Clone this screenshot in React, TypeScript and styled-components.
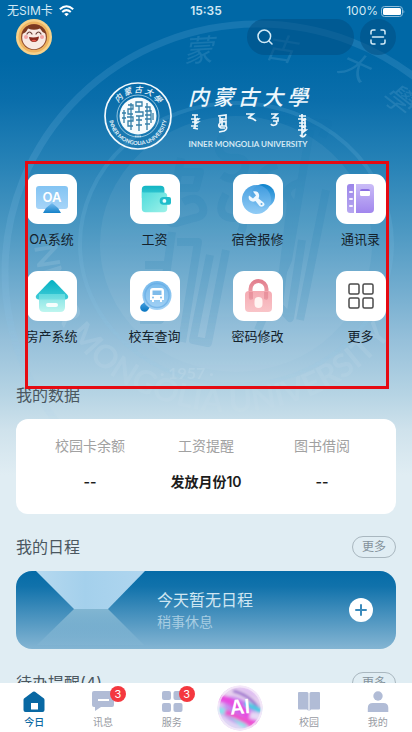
import React from 'react';
import styled, { createGlobalStyle, css } from 'styled-components';

const GlobalStyle = createGlobalStyle`
  *, *::before, *::after { box-sizing: border-box; }
  html, body { margin: 0; padding: 0; }
  body, button, input {
    font-family: Inter, 'Noto Sans CJK SC', sans-serif;
  }
  button { border: 0; padding: 0; background: none; cursor: pointer; color: inherit; }
  svg { display: block; }
  h1, h2, p, dl, dt, dd { margin: 0; font-weight: 400; }
`;

const Page = styled.div`
  position: relative;
  display: flex;
  flex-direction: column;
  height: 100vh;
  overflow: hidden;
  background: #e0edf3 linear-gradient(
    #0068a6 0, #0068a6 60px, #0a6eab 100px, #2581b6 160px, #4c98c2 230px,
    #73adcf 290px, #96c0da 340px, #b6d4e4 395px, #cfe2ec 430px, #e0edf3 475px
  ) no-repeat;
`;

const Watermark = styled.svg`
  position: absolute;
  top: 0;
  left: 50%;
  transform: translateX(-50%);
  pointer-events: none;
`;

const Content = styled.main`
  position: relative;
  flex: 1;
  min-height: 0;
  overflow: hidden;
`;

const StatusBar = styled.div`
  display: grid;
  grid-template-columns: 1fr auto 1fr;
  align-items: center;
  padding: 3px 7px 0;
  line-height: 16px;
  font-size: 12px;
  color: #d3e8f4;
`;

const StatusGroup = styled.div<{ $end?: boolean }>`
  display: flex;
  align-items: center;
  gap: ${(p) => (p.$end ? 3 : 6)}px;
  justify-content: ${(p) => (p.$end ? 'flex-end' : 'flex-start')};
`;

const Clock = styled.span`
  font-size: 12px;
  font-weight: 600;
`;

const Header = styled.header`
  display: flex;
  align-items: center;
  gap: 6px;
  padding: 0 16px;
`;

const Avatar = styled.button`
  margin-right: auto;
  width: 36px;
  height: 36px;
  border-radius: 50%;
`;

const SearchBox = styled.label`
  display: flex;
  align-items: center;
  gap: 8px;
  width: 107px;
  height: 36px;
  padding: 0 10px;
  border-radius: 18px;
  background: rgba(0, 76, 128, 0.5);
`;

const SearchInput = styled.input`
  flex: 1;
  min-width: 0;
  border: 0;
  outline: 0;
  background: transparent;
  color: #fff;
  font-size: 14px;
`;

const ScanButton = styled.button`
  display: grid;
  place-items: center;
  width: 36px;
  height: 36px;
  border-radius: 50%;
  background: rgba(0, 76, 128, 0.5);
`;

const Brand = styled.div`
  display: flex;
  justify-content: center;
  gap: 16px;
  margin-top: 27px;
  color: #eef7fc;
`;

const BrandWords = styled.div`
  width: 120px;
`;

const BrandName = styled.h1`
  display: flex;
  justify-content: space-between;
  font-size: 21px;
  font-weight: 500;
  line-height: 31px;
  font-style: italic;
`;

const BrandLatin = styled.p`
  font: 700 8px/12px Lato, sans-serif;
  text-align: center;
  white-space: nowrap;
  color: #d3e8f4;
`;

const AppSection = styled.section`
  position: relative;
  padding-top: 24px;
`;

const AppGrid = styled.div`
  display: grid;
  grid-template-columns: repeat(4, 1fr);
  row-gap: 22px;
`;

const AppButton = styled.button`
  display: flex;
  flex-direction: column;
  align-items: center;
  gap: 5px;
  font-size: 13px;
  line-height: 20px;
  color: #14222c;
`;

const Tile = styled.span`
  display: grid;
  place-items: center;
  width: 50px;
  height: 50px;
  border-radius: 11px;
  background: #fff;
`;

const Highlight = styled.div`
  position: absolute;
  top: 11px;
  left: 25px;
  right: 23px;
  height: 228px;
  border: 3px solid #e60a12;
  pointer-events: none;
`;

const SectionHead = styled.div<{ $gap: number }>`
  display: flex;
  align-items: center;
  justify-content: space-between;
  height: 24px;
  margin: ${(p) => p.$gap}px 16px 12px;
`;

const SectionTitle = styled.h2`
  font-size: 16px;
  line-height: 24px;
  color: #4b575f;
`;

const MoreButton = styled.button`
  width: 44px;
  height: 22px;
  border: 1px solid #a9b7bf;
  border-radius: 11px;
  font-size: 12px;
  line-height: 20px;
  color: #84929b;
`;

const StatsCard = styled.dl`
  display: grid;
  grid-template-columns: repeat(3, 1fr);
  margin: 0 16px;
  padding: 17px 16px 22px;
  border-radius: 12px;
  background: #fff;
  text-align: center;
  line-height: 20px;
`;

const StatLabel = styled.dt`
  margin-bottom: 16px;
  font-size: 14px;
  color: #a1a1a1;
`;

const StatValue = styled.dd`
  font-size: 14px;
  font-weight: 600;
  color: #1c1c1c;
`;

const ScheduleCard = styled.section`
  display: grid;
  grid-template-columns: 141px 1fr auto;
  align-items: center;
  height: 78px;
  margin: 0 16px;
  padding-right: 23px;
  border-radius: 16px;
  overflow: hidden;
  background: linear-gradient(#056ba7 0, #1172ab 20%, #4590bd 55%, #84b5d3 100%);
`;

const ScheduleTitle = styled.p`
  font-size: 16px;
  line-height: 24px;
  color: #cfe6f2;
`;

const ScheduleNote = styled.p`
  font-size: 14px;
  line-height: 20px;
  color: #a7cde2;
`;

const AddButton = styled.button`
  display: grid;
  place-items: center;
  width: 24px;
  height: 24px;
  border-radius: 50%;
  background: #fff;
`;

const TabBar = styled.nav`
  position: relative;
  display: grid;
  grid-template-columns: repeat(6, 1fr);
  height: 49px;
  background: #fff;
`;

const Tab = styled.button<{ $active?: boolean }>`
  display: flex;
  flex-direction: column;
  align-items: center;
  gap: 1px;
  padding-top: 8px;
  font-size: 10px;
  line-height: 16px;
  color: #989ba3;
  ${(p) => p.$active && css`color: #0b69a3; font-weight: 500;`}
`;

const TabIcon = styled.span`
  position: relative;
`;

const AiTab = styled.button`
  display: grid;
  place-items: center;
`;

const Badge = styled.span`
  position: absolute;
  top: -5px;
  left: 18px;
  width: 16px;
  height: 16px;
  border-radius: 50%;
  background: #f4383f;
  color: #fff;
  font-size: 11px;
  font-weight: 400;
  line-height: 16px;
  text-align: center;
`;

const cjk = "'Noto Sans CJK SC', sans-serif";

function SealWatermark() {
  return (
    <Watermark width="412" height="480" viewBox="0 0 412 480" aria-hidden="true">
      <defs>
        <linearGradient id="fade" x1="0" y1="0" x2="0" y2="1">
          <stop offset="0" stopColor="#fff" />
          <stop offset=".65" stopColor="#fff" />
          <stop offset=".95" stopColor="#000" />
        </linearGradient>
        <mask id="fadeMask"><rect width="412" height="480" fill="url(#fade)" /></mask>
        <path id="ringText" d="M34 232 A196 180 0 0 0 426 232 V150" />
      </defs>
      <g mask="url(#fadeMask)">
        <g fill="none" stroke="#8cc8ea">
          <ellipse cx="258" cy="272" rx="253" ry="248" strokeWidth="7" opacity=".16" />
          <ellipse cx="236" cy="244" rx="156" ry="141" strokeWidth="4" opacity=".15" />
        </g>
        <ellipse cx="236" cy="244" rx="136" ry="128" fill="#fff" opacity=".06" />
        <g fill="#b9e0f4" opacity=".13" fontFamily={cjk} fontSize="30" fontStyle="italic">
          <text transform="translate(184 62) rotate(-3)">蒙</text>
          <text transform="translate(264 57) rotate(9)">古</text>
          <text transform="translate(336 70) rotate(24)">大</text>
          <text transform="translate(380 98) rotate(38)">學</text>
        </g>
        <text fill="#fff" opacity=".11" fontFamily="Lato, sans-serif" fontWeight="700" fontSize="32">
          <textPath href="#ringText" startOffset="4">INNER MONGOLIA UNIVERSITY</textPath>
        </text>
        <text x="160" y="379" fill="#fff" opacity=".17" fontFamily="Lato, sans-serif" fontWeight="700" fontSize="16">· 1957 ·</text>
        <g fill="none" stroke="#1471aa" strokeWidth="8" opacity=".13" strokeLinejoin="round">
          <path d="M181 158 L170 218 Q168 226 180 222 L194 218 Q207 216 202 205 Q197 194 183 202 M176 172 H200 L196 188 H174" />
          <path d="M172 232 L160 320 H140 M177 242 H198 L182 342 M164 265 H145 M160 290 H142" />
          <path d="M223 135 Q212 155 230 158 Q250 156 244 171 Q235 184 222 175 M226 194 Q214 216 232 218 Q248 216 241 232" />
          <path d="M210 255 L193 340 L208 343 L226 250" />
          <path d="M270 118 L328 124 L322 137 M310 130 L288 260 L258 330 M277 165 Q252 172 268 188 Q286 193 272 208" />
          <path d="M302 182 Q279 188 291 202 L279 306 L290 318 L302 240 M326 190 L300 320" />
        </g>
      </g>
    </Watermark>
  );
}

function Seal() {
  return (
    <svg width="68" height="68" viewBox="0 0 68 68" fill="none" role="img" aria-label="Inner Mongolia University">
      <defs>
        <path id="sealTop" d="M10.5 34 A23.500 23.500 0 0 1 57.500 34" />
        <path id="sealBottom" d="M5 34 A29 29 0 0 0 63 34" />
      </defs>
      <circle cx="34" cy="34" r="33" stroke="#f2f9fd" strokeWidth="1.700" />
      <circle cx="34" cy="34" r="21" stroke="#b5d8ea" strokeWidth=".8" />
      <circle cx="34" cy="34" r="18.500" fill="#f6fbfd" />
      <text fill="#f2f9fd" fontFamily={cjk} fontSize="8" fontWeight="500" fontStyle="italic">
        <textPath href="#sealTop" startOffset="37" textAnchor="middle">内 蒙 古 大 學</textPath>
      </text>
      <text fill="#e4f2f9" fontFamily="Lato, sans-serif" fontWeight="700" fontSize="5.500">
        <textPath href="#sealBottom" startOffset="45.500" textAnchor="middle">INNER MONGOLIA UNIVERSITY</textPath>
      </text>
      <g stroke="#347fa8" strokeWidth="1.300">
        <path d="M27 21v27M24 23h5v4h-5v5h5M23 35h6v4h-5v5h5M20 28v13M18 31h4M18 36h4" />
        <path d="M32 20h6v4h-6zM35 24v6M31 30h8v4h-7M35 34v15M32 38h6M32 43h6" />
        <path d="M43 21v27M41 25h5v4h-5M41 33h6v4h-6M47 28v13M41 42h5M49 31v7" />
      </g>
      <path d="M31 54.500h6" stroke="#c6e1ef" strokeWidth="1.500" strokeDasharray="1.200 .4" />
    </svg>
  );
}

function MongolianScript() {
  return (
    <svg width="120" height="25" viewBox="0 0 120 25" fill="none" stroke="#eef7fc" strokeWidth="1.700" aria-hidden="true">
      <path d="M4 2h6M7 2v13M3 6h7l-3 2M4 9h6l-3 2M3 13h7M9 5l2 2M5 15l5 1" />
      <path d="M30 3l8-1v4h-6v3l7-1M32 3v7q-3 3 1 5h4M38 8v5q2 3-2 5l-5 1M31 13h7M34 5v8" />
      <path d="M58 1h7l-5 4q4-1 8 3" />
      <path d="M83 1h6l-4 4h5v3h-5M88 8q2 3-1 4-3 1-4-1" />
      <path d="M111 3h7M114 1v22M110 6h8l-4 2M111 10h7M111 13h7l-4 2M110 17h8l-4 3M112 22q3 4 6-1M117 5v13" />
    </svg>
  );
}

function AvatarFace() {
  return (
    <svg width="36" height="36" viewBox="0 0 36 36">
      <circle cx="18" cy="18" r="18" fill="#f6d28b" />
      <circle cx="18" cy="18" r="15.500" fill="#eeb461" />
      <circle cx="18" cy="18" r="13" fill="#8f4a2e" />
      <circle cx="18" cy="18.500" r="11.800" fill="#f8e9e4" />
      <path d="M6 15Q8 5.500 18 5.500T30 15Q26 13.500 24 9.500 18 12 12 9.500 10 14 6 15z" fill="#7d3a20" />
      <circle cx="10" cy="18" r="2" fill="#f3a5a5" /><circle cx="26" cy="18" r="2" fill="#f3a5a5" />
      <path d="M11 15q2.500-4 5 0M20 15q2.500-4 5 0" fill="none" stroke="#6b4038" strokeWidth="1.200" strokeLinecap="round" />
      <path d="M13 18q5 1 10-.5-.5 5.500-5 5.500t-5-5z" fill="#8b2b20" />
      <path d="M15.500 21.500q2.500-1.500 5 0-2.500 2-5 0z" fill="#e8584f" />
    </svg>
  );
}

const WifiIcon = () => (
  <svg width="15" height="12" viewBox="0 0 15 12" fill="none" stroke="#fff" strokeWidth="2">
    <path d="M.8 4.300Q7.500-1.800 14.200 4.300M3.200 7q4.300-3.800 8.600 0" />
    <path d="M5.200 8.900q2.300-1.700 4.600 0L7.500 11.300z" fill="#fff" stroke="none" />
  </svg>
);

const BatteryIcon = () => (
  <svg width="24" height="11" viewBox="0 0 24 11">
    <rect x=".5" y=".5" width="21" height="10" rx="3" fill="none" stroke="#8dbddb" />
    <rect x="2" y="2" width="18" height="7" rx="1.500" fill="#fff" />
    <path d="M22.500 3.500q1.500 2 0 4z" fill="#8dbddb" />
  </svg>
);

const SearchIcon = () => (
  <svg width="16" height="16" viewBox="0 0 16 16" fill="none" stroke="#d3ebf7" strokeWidth="1.500" strokeLinecap="round">
    <circle cx="7.300" cy="7.300" r="6.300" /><path d="M12 12l3 3" />
  </svg>
);

const ScanIcon = () => (
  <svg width="16" height="16" viewBox="0 0 16 16" fill="none" stroke="#d3ebf7" strokeWidth="1.500" strokeLinecap="round">
    <path d="M1 5V3q0-2 2-2h2M11 1h2q2 0 2 2v2M15 11v2q0 2-2 2h-2M5 15H3q-2 0-2-2v-2M2.500 8h11" />
  </svg>
);

function Gradient({ id, from, to, diagonal }: { id: string; from: string; to: string; diagonal?: boolean }) {
  return (
    <linearGradient id={id} x1="0" y1="0" x2={diagonal ? '1' : '0'} y2="1">
      <stop stopColor={from} /><stop offset="1" stopColor={to} />
    </linearGradient>
  );
}

const OaIcon = () => (
  <svg width="34" height="34" viewBox="0 0 34 34">
    <defs>
      <Gradient id="oaScreen" from="#83c4f3" to="#a6d4f8" />
      <Gradient id="oaFoot" from="#79bdf0" to="#1582c9" />
    </defs>
    <rect x="1" y="4" width="32" height="23" rx="3" fill="url(#oaScreen)" />
    <path d="M17 21l6 5 3 5H8l3-5z" fill="url(#oaFoot)" />
    <text x="17" y="20" textAnchor="middle" fill="#fff" fontFamily="Inter, sans-serif" fontWeight="600" fontSize="13">OA</text>
  </svg>
);

const WalletIcon = () => (
  <svg width="32" height="32" viewBox="0 0 34 34">
    <defs>
      <Gradient id="wBack" from="#12b5c3" to="#43ced8" />
      <Gradient id="wFront" from="#4ddbdc" to="#9df1e8" diagonal />
    </defs>
    <path d="M3 7q0-4 4-4h16q4 0 4 4v9H3z" fill="url(#wBack)" />
    <path d="M3 9q0 1 2 1h21q4 0 4 4v13q0 4-4 4H7q-4 0-4-4z" fill="url(#wFront)" />
    <path d="M26 15h6q2 0 2 2v4q0 2-2 2h-6a4 4 0 0 1 0-8z" fill="#20bdca" />
    <circle cx="27" cy="19" r="2" fill="#eaffff" />
  </svg>
);

const RepairIcon = () => (
  <svg width="34" height="34" viewBox="0 0 34 34">
    <defs>
      <Gradient id="rBack" from="#0d83cc" to="#71baf0" />
      <Gradient id="rFront" from="#419cdf" to="#8bc9f5" />
    </defs>
    <circle cx="22" cy="14" r="12" fill="url(#rBack)" />
    <circle cx="15.500" cy="17.500" r="14.500" fill="url(#rFront)" opacity=".95" />
    <path d="M8 13.500l4 3 3-3-3-4q5-1 6 3 .5 2-.5 4l5 4q2 2 0 3.500t-4 0l-4-5q-3 1.500-5.500-.5-2-2-1-5z" fill="#eef8ff" />
    <circle cx="20.500" cy="22" r="1" fill="#65aee4" />
  </svg>
);

const ContactsIcon = () => (
  <svg width="34" height="34" viewBox="0 0 34 34">
    <defs>
      <Gradient id="cSide" from="#9c86e9" to="#b7a7f0" />
      <Gradient id="cBody" from="#cabcf7" to="#a186ed" />
    </defs>
    <path d="M6 2h4v29H6q-3 0-3-3V5q0-3 3-3z" fill="url(#cSide)" />
    <path d="M12 2h14q4 0 4 4v21q0 4-4 4H12z" fill="url(#cBody)" />
    <path d="M5 10h4M5 17h4M5 24h4" stroke="#f4f0ff" strokeWidth="1.500" />
    <path d="M7 9v2M7 16v2M7 23v2" stroke="#f4f0ff" strokeWidth="2" />
    <rect x="16" y="8" width="10" height="6" rx="1.500" fill="#fff" />
    <path d="M16 9q0-2 2-2h6q2 0 2 2z" fill="#8b6ee2" />
  </svg>
);

const HouseIcon = () => (
  <svg width="34" height="34" viewBox="0 0 34 34">
    <defs>
      <Gradient id="hRoof" from="#05b0c2" to="#42cdd8" />
      <Gradient id="hBody" from="#67dce0" to="#b3f4ec" />
    </defs>
    <path d="M15 2q2-2 4 0l13.500 14q2 3-1.500 4.500H3Q-.5 19 1.500 16z" fill="url(#hRoof)" />
    <path d="M4 15h26v13q0 5-5 5H9q-5 0-5-5z" fill="url(#hBody)" opacity=".85" />
    <rect x="11" y="24" width="12" height="4" rx="2" fill="#fff" opacity=".9" />
  </svg>
);

const BusIcon = () => (
  <svg width="34" height="34" viewBox="0 0 34 34">
    <defs>
      <Gradient id="bLens" from="#76b9eb" to="#a4d2f5" />
      <Gradient id="bGrip" from="#56abe8" to="#0875c0" />
    </defs>
    <path d="M9 21l5 4-4 6a4 4 0 0 1-7-5z" fill="url(#bGrip)" />
    <circle cx="19" cy="16.500" r="14.500" fill="url(#bLens)" />
    <circle cx="19" cy="16.500" r="12" fill="none" stroke="#61a9e2" strokeWidth="1.500" opacity=".6" />
    <path d="M15 9h8q3 0 3 3v9h-2v2h-2v-2h-6v2h-2v-2h-2v-9q0-3 3-3z" fill="#fff" />
    <path d="M14.500 11.500h9V16h-9z" fill="#7ebbea" />
    <circle cx="15" cy="18.500" r="1" fill="#7ebbea" /><circle cx="23" cy="18.500" r="1" fill="#7ebbea" />
  </svg>
);

const LockIcon = () => (
  <svg width="34" height="34" viewBox="0 0 34 34">
    <defs>
      <Gradient id="lShackle" from="#e2808f" to="#f0a8ae" />
      <Gradient id="lBody" from="#f4a3ac" to="#f8bfc3" />
    </defs>
    <path d="M9.500 19v-9a8 8 0 0 1 16 0v9" fill="none" stroke="url(#lShackle)" strokeWidth="4" />
    <rect x="4" y="12" width="27" height="21" rx="4" fill="url(#lBody)" opacity=".92" />
    <path d="M8 13h4v7q-4 2-4-1zM23 13h4v6q0 3-4 1z" fill="#de7d8b" opacity=".5" />
    <rect x="13.500" y="18" width="8" height="11" rx="4" fill="#fff4f2" />
  </svg>
);

const GridIcon = () => (
  <svg width="34" height="34" viewBox="0 0 34 34" fill="none" stroke="#4a4a4a" strokeWidth="1.500">
    <rect x="5" y="5" width="10" height="10" rx="1.500" />
    <rect x="19" y="5" width="10" height="10" rx="1.500" />
    <rect x="5" y="19" width="10" height="10" rx="1.500" />
    <rect x="19" y="19" width="10" height="10" rx="1.500" />
  </svg>
);

function ScheduleArt() {
  return (
    <svg width="141" height="78" viewBox="0 0 141 78" aria-hidden="true">
      <defs>
        <linearGradient id="beam" x1="0" x2="1" y1="0" y2="0">
          <stop stopColor="#b6d9ef" /><stop offset=".45" stopColor="#a4d0ec" /><stop offset="1" stopColor="#b0d6ef" />
        </linearGradient>
        <linearGradient id="mirror" x1="0" y1="0" x2="0" y2="1">
          <stop stopColor="#82b6d2" /><stop offset="1" stopColor="#8abad6" stopOpacity=".3" />
        </linearGradient>
      </defs>
      <path d="M20 0h109L92 38H58z" fill="url(#beam)" />
      <path d="M58 38h34l36 36H21z" fill="url(#mirror)" />
    </svg>
  );
}

const PlusIcon = () => (
  <svg width="12" height="12" viewBox="0 0 12 12" stroke="#3a8abb" strokeWidth="2" strokeLinecap="round">
    <path d="M6 1v10M1 6h10" />
  </svg>
);

const TodayIcon = () => (
  <svg width="22" height="22" viewBox="0 0 22 22">
    <path d="M10 .8q1-.8 2 0l9 6.700q.5.500.5 1.500v10q0 2-2 2h-17q-2 0-2-2V9q0-1 .5-1.500z" fill="#0868a3" />
    <rect x="8" y="12" width="7" height="6.500" fill="#fff" />
  </svg>
);

const MessageIcon = () => (
  <svg width="22" height="22" viewBox="0 0 22 22">
    <path d="M2 0h18q2 0 2 2v12q0 2-2 2H9l-6 4v-4H2q-2 0-2-2V2q0-2 2-2z" fill="#b1bcd6" />
    <path d="M6 9h11" stroke="#fff" strokeWidth="2" />
  </svg>
);

const ServiceIcon = () => (
  <svg width="22" height="22" viewBox="0 0 22 22" fill="#b1bcd6">
    <rect x="1" width="9" height="9" rx="2" /><rect x="12.500" width="9" height="9" rx="2" />
    <rect x="1" y="12" width="9" height="9" rx="2" /><rect x="12.500" y="12" width="9" height="9" rx="2" />
  </svg>
);

const CampusIcon = () => (
  <svg width="22" height="22" viewBox="0 0 22 22" fill="#b1bcd6">
    <path d="M1 1h8q1.500 0 1.500 1.500V20L9 18.500H1q-1 0-1-1V2q0-1 1-1zM21 1h-8q-1.500 0-1.500 1.500V20l1.500-1.500h8q1 0 1-1V2q0-1-1-1z" />
  </svg>
);

const MeIcon = () => (
  <svg width="22" height="22" viewBox="0 0 22 22" fill="#b1bcd6">
    <circle cx="11" cy="5" r="4.700" /><path d="M.8 21v-4q0-5 5-5h10.500q5 0 5 5v4z" />
  </svg>
);

function AiOrb() {
  return (
    <svg width="46" height="46" viewBox="0 0 46 46">
      <defs>
        <radialGradient id="orb">
          <stop stopColor="#c55cf0" /><stop offset=".6" stopColor="#c794ee" /><stop offset="1" stopColor="#f1dff6" />
        </radialGradient>
        <clipPath id="orbClip"><circle cx="23" cy="23" r="22.500" /></clipPath>
        <filter id="orbSoft"><feGaussianBlur stdDeviation="1.500" /></filter>
      </defs>
      <g clipPath="url(#orbClip)">
        <rect width="46" height="46" fill="url(#orb)" />
        <g fill="none" filter="url(#orbSoft)">
          <path d="M5 7Q22 3 45 23" stroke="#e8d3ef" strokeWidth="9" />
          <path d="M16 6Q32 9 43 25" stroke="#8a53c7" strokeWidth="2.500" />
          <path d="M2 13Q14 14 25 25T45 37" stroke="#e84be0" strokeWidth="7" />
          <path d="M28 18l16 8" stroke="#48cbe3" strokeWidth="5" />
          <path d="M1 25Q15 27 28 42" stroke="#89e3eb" strokeWidth="6" />
          <path d="M8 27Q18 30 36 40" stroke="#f051cc" strokeWidth="5" />
          <path d="M3 34Q14 41 26 45" stroke="#ded6f4" strokeWidth="6" />
          <path d="M33 30l12 3" stroke="#e6d9f5" strokeWidth="7" />
        </g>
        <circle cx="23" cy="23" r="21.500" fill="none" stroke="#f8effb" strokeWidth="2" opacity=".7" />
        <text x="23" y="29" textAnchor="middle" fill="#fff" fontFamily="Inter, sans-serif" fontWeight="600" fontSize="20" transform="rotate(-5 23 23)">AI</text>
      </g>
    </svg>
  );
}

const apps = [
  { label: 'OA系统', Icon: OaIcon },
  { label: '工资', Icon: WalletIcon },
  { label: '宿舍报修', Icon: RepairIcon },
  { label: '通讯录', Icon: ContactsIcon },
  { label: '房产系统', Icon: HouseIcon },
  { label: '校车查询', Icon: BusIcon },
  { label: '密码修改', Icon: LockIcon },
  { label: '更多', Icon: GridIcon },
];

const stats = [
  { label: '校园卡余额', value: '--' },
  { label: '工资提醒', value: '发放月份10' },
  { label: '图书借阅', value: '--' },
];

function TabItem({ label, Icon, badge, active }: { label: string; Icon: React.ComponentType; badge?: number; active?: boolean }) {
  return (
    <Tab type="button" $active={active} aria-current={active ? 'page' : undefined}>
      <TabIcon>
        <Icon />
        {badge ? <Badge>{badge}</Badge> : null}
      </TabIcon>
      {label}
    </Tab>
  );
}

export default function App() {
  return (
    <>
      <GlobalStyle />
      <Page>
        <SealWatermark />
        <Content>
          <StatusBar>
            <StatusGroup>无SIM卡 <WifiIcon /></StatusGroup>
            <Clock>15:35</Clock>
            <StatusGroup $end>100% <BatteryIcon /></StatusGroup>
          </StatusBar>
          <Header>
            <Avatar type="button" aria-label="头像"><AvatarFace /></Avatar>
            <SearchBox>
              <SearchIcon />
              <SearchInput type="search" aria-label="搜索" />
            </SearchBox>
            <ScanButton type="button" aria-label="扫一扫"><ScanIcon /></ScanButton>
          </Header>
          <Brand>
            <Seal />
            <BrandWords>
              <BrandName aria-label="内蒙古大學">
                {[...'内蒙古大學'].map((char) => <span key={char}>{char}</span>)}
              </BrandName>
              <MongolianScript />
              <BrandLatin>INNER MONGOLIA UNIVERSITY</BrandLatin>
            </BrandWords>
          </Brand>
          <AppSection>
            <AppGrid>
              {apps.map(({ label, Icon }) => (
                <AppButton type="button" key={label}>
                  <Tile><Icon /></Tile>
                  {label}
                </AppButton>
              ))}
            </AppGrid>
            <Highlight />
          </AppSection>

          <SectionHead $gap={37}><SectionTitle>我的数据</SectionTitle></SectionHead>
          <StatsCard>
            {stats.map(({ label, value }) => (
              <div key={label}>
                <StatLabel>{label}</StatLabel>
                <StatValue>{value}</StatValue>
              </div>
            ))}
          </StatsCard>

          <SectionHead $gap={21}>
            <SectionTitle>我的日程</SectionTitle>
            <MoreButton type="button">更多</MoreButton>
          </SectionHead>
          <ScheduleCard>
            <ScheduleArt />
            <div>
              <ScheduleTitle>今天暂无日程</ScheduleTitle>
              <ScheduleNote>稍事休息</ScheduleNote>
            </div>
            <AddButton type="button" aria-label="添加日程"><PlusIcon /></AddButton>
          </ScheduleCard>

          <SectionHead $gap={22}>
            <SectionTitle>待办提醒(4)</SectionTitle>
            <MoreButton type="button">更多</MoreButton>
          </SectionHead>
        </Content>
        <TabBar>
          <TabItem label="今日" Icon={TodayIcon} active />
          <TabItem label="讯息" Icon={MessageIcon} badge={3} />
          <TabItem label="服务" Icon={ServiceIcon} badge={3} />
          <AiTab type="button" aria-label="AI"><AiOrb /></AiTab>
          <TabItem label="校园" Icon={CampusIcon} />
          <TabItem label="我的" Icon={MeIcon} />
        </TabBar>
      </Page>
    </>
  );
}
